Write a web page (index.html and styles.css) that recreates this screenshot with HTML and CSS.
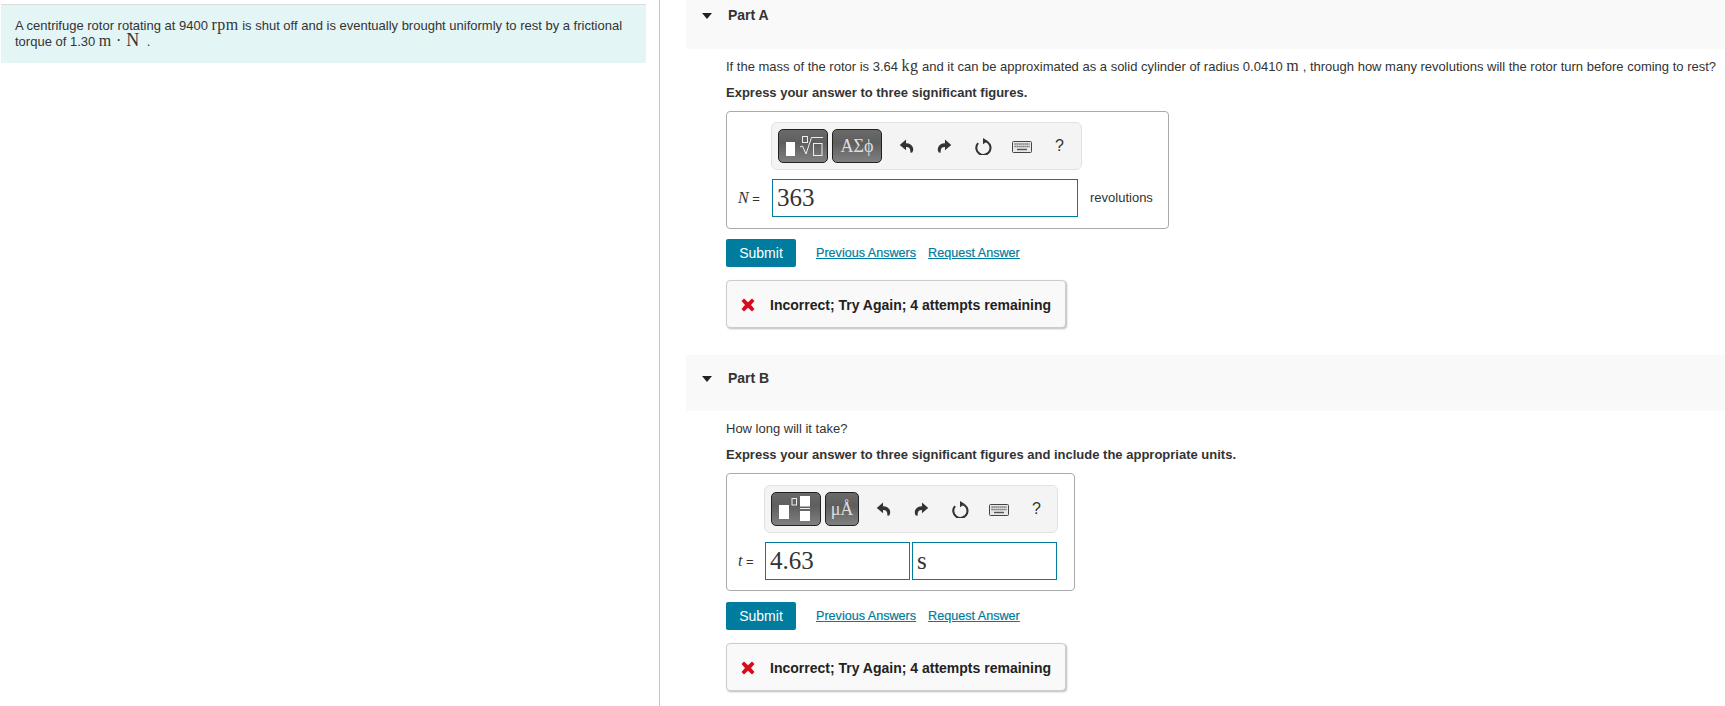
FILE: index.html
```html
<!DOCTYPE html>
<html lang="en">
<head>
<meta charset="utf-8">
<title>Centrifuge rotor</title>
<link rel="stylesheet" href="styles.css">
</head>
<body>
<svg class="defs" width="0" height="0" aria-hidden="true">
  <defs>
    <symbol id="undo" viewBox="0 0 16 16"><path d="M7.500 1 .8 6.800 7.500 12.500V9c2.600-.2 4 .9 4.500 3.500l.2 2.800 1.900-.3c.9-1.600 1.300-3.300.9-5C14 6.800 11.500 5 7.500 5Z"/></symbol>
    <symbol id="redo" viewBox="0 0 16 16"><path d="M8.500 1 15.200 6.800 8.500 12.500V9c-2.600-.2-4 .9-4.500 3.500l-.2 2.800-1.900-.3C1 13.400.6 11.700 1 10 2 6.800 4.500 5 8.500 5Z"/></symbol>
    <symbol id="reset" viewBox="0 0 18 18"><path d="M10.500 3.100A7.500 7.500 0 1 1 3.300 5.400" fill="none" stroke="currentColor" stroke-width="2.200"/><path d="M8.500 0 13.500 3.200 8.500 6.500Z"/></symbol>
    <symbol id="kbd" viewBox="0 0 20 12"><rect x=".5" y=".5" width="19" height="11" rx="1" fill="#e8e8e8" stroke="#444"/><path d="M2.500 3h15M2.500 5.500h15" stroke="#555" stroke-width="1.300" stroke-dasharray="1.200 .8"/><path d="M5 8.500h10" stroke="#555" stroke-width="1.400"/></symbol>
    <symbol id="cross" viewBox="0 0 14 14"><path d="M3 .5 7 4.200 11 .5 13.500 3 10 7 13.500 11 11 13.500 7 9.800 3 13.500 .5 11 4 7 .5 3Z"/></symbol>
  </defs>
</svg>
<div class="page">
  <aside class="left">
    <div class="intro">A centrifuge rotor rotating at 9400 <span class="math">rpm</span> is shut off and is eventually brought uniformly to rest by a frictional torque of 1.30 <span class="math">m · <span class="math-big">N</span></span> &nbsp;.</div>
  </aside>
  <main class="right">
    <section class="part part-a">
      <header class="part-head"><span class="caret"></span><h2>Part A</h2></header>
      <div class="part-body">
        <p class="question">If the mass of the rotor is 3.64 <span class="math">kg</span> and it can be approximated as a solid cylinder of radius 0.0410 <span class="math">m</span> , through how many revolutions will the rotor turn before coming to rest?</p>
        <p class="instr">Express your answer to three significant figures.</p>
        <div class="answer answer-a">
          <div class="toolbar">
            <div class="tool tool-wide">
              <svg width="40" height="28" viewBox="0 0 40 28"><rect x="3" y="10" width="9" height="14" fill="#fff"/><rect x="19.500" y="4.500" width="5" height="6" fill="none" stroke="#eee"/><path d="M17 15l2.500-1 3.500 8 5.500-16.500h11.500" fill="none" stroke="#eee"/><rect x="30.500" y="11.500" width="8.500" height="12" fill="none" stroke="#eee"/></svg>
            </div>
            <div class="tool tool-wide tool-text">ΑΣϕ</div>
            <div class="actions">
              <svg class="ic"><use href="#undo"/></svg>
              <svg class="ic"><use href="#redo"/></svg>
              <svg class="ic-reset"><use href="#reset"/></svg>
              <svg class="ic-kbd"><use href="#kbd"/></svg>
              <span class="help">?</span>
            </div>
          </div>
          <div class="row">
            <span class="var"><i>N</i> =</span>
            <div class="field field-n">363</div>
            <span class="unit">revolutions</span>
          </div>
        </div>
        <div class="submit-row">
          <button class="submit" type="button">Submit</button>
          <a class="link" href="#">Previous Answers</a>
          <a class="link" href="#">Request Answer</a>
        </div>
        <div class="feedback"><svg class="cross"><use href="#cross"/></svg><span>Incorrect; Try Again; 4 attempts remaining</span></div>
      </div>
    </section>
    <section class="part part-b">
      <header class="part-head"><span class="caret"></span><h2>Part B</h2></header>
      <div class="part-body">
        <p class="question">How long will it take?</p>
        <p class="instr">Express your answer to three significant figures and include the appropriate units.</p>
        <div class="answer answer-b">
          <div class="toolbar">
            <div class="tool tool-wide">
              <svg width="40" height="28" viewBox="0 0 40 28"><rect x="3" y="10" width="10" height="14" fill="#fff"/><rect x="16" y="3.500" width="4.500" height="6.500" fill="none" stroke="#eee"/><rect x="24" y="1" width="10" height="10.500" fill="#fff"/><path d="M24 13.500h10" stroke="#eee"/><rect x="24" y="16" width="10" height="10" fill="#fff"/></svg>
            </div>
            <div class="tool tool-narrow tool-text">μÅ</div>
            <div class="actions">
              <svg class="ic"><use href="#undo"/></svg>
              <svg class="ic"><use href="#redo"/></svg>
              <svg class="ic-reset"><use href="#reset"/></svg>
              <svg class="ic-kbd"><use href="#kbd"/></svg>
              <span class="help">?</span>
            </div>
          </div>
          <div class="row">
            <span class="var var-t"><i>t</i> =</span>
            <div class="field field-t">4.63</div>
            <div class="field field-t">s</div>
          </div>
        </div>
        <div class="submit-row">
          <button class="submit" type="button">Submit</button>
          <a class="link" href="#">Previous Answers</a>
          <a class="link" href="#">Request Answer</a>
        </div>
        <div class="feedback"><svg class="cross"><use href="#cross"/></svg><span>Incorrect; Try Again; 4 attempts remaining</span></div>
      </div>
    </section>
  </main>
</div>
</body>
</html>
```
FILE: styles.css
```css
* { box-sizing: border-box; }
html, body { margin: 0; height: 706px; overflow: hidden; background: #fff; }
body { font-family: "Liberation Sans", Arial, sans-serif; font-size: 13px; color: #333; }
.defs { position: absolute; }
.page { display: flex; height: 706px; }
.left { width: 660px; flex: none; border-right: 1px solid #bcc8da; padding: 4px 0 0 1px; }
.intro { width: 645px; height: 59px; background: #e4f5f6; border-top: 1px solid #ddd; padding: 13px 20px 0 14px; line-height: 15px; }
.math { font-family: "Liberation Serif", serif; font-size: 16px; line-height: 14px; letter-spacing: .4px; color: #333; }
.math-big { font-size: 18px; }
.right { flex: 1; min-width: 0; padding-left: 26px; }
.part-head { display: flex; align-items: flex-start; height: 49px; background: #f9f9f9; padding: 7px 0 0 16px; }
.part-b .part-head { height: 56px; padding-top: 15px; }
.caret { width: 0; height: 0; margin-top: 6px; border-left: 5px solid transparent; border-right: 5px solid transparent; border-top: 6px solid #222; }
.part-head h2 { margin: 0 0 0 16px; font-size: 14px; line-height: 16px; font-weight: bold; color: #333; }
.part-a { margin-bottom: 27px; }
.part-body { padding-left: 40px; white-space: nowrap; }
.question { margin: 0; padding-top: 10px; height: 33px; line-height: 16px; }
.part-b .question { height: 31px; }
.instr { margin: 0; height: 29px; padding-top: 3px; line-height: 16px; font-weight: bold; }
.part-b .instr { height: 31px; padding-top: 5px; }
.answer { border: 1px solid #aaa; border-radius: 4px; height: 118px; padding: 10px 0 0 44px; }
.answer-a { width: 443px; }
.answer-b { width: 349px; padding: 11px 0 0 37px; }
.toolbar { display: flex; align-items: center; height: 48px; background: #f4f4f4; border: 1px solid #e2e2e2; border-radius: 6px; padding: 0 6px; gap: 4px; }
.answer-a .toolbar { width: 311px; }
.answer-b .toolbar { width: 294px; }
.tool { height: 34px; display: flex; align-items: center; justify-content: center; border: 1px solid #222; border-radius: 5px; background: linear-gradient(#6a6a6a, #5e5e5e 40%, #808080); color: #ddd; }
.tool-wide { width: 50px; }
.tool-narrow { width: 34px; }
.tool-text { font-family: "Liberation Serif", serif; font-size: 18px; }
.actions { display: flex; align-items: center; margin-left: 13px; color: #333; fill: #333; }
.ic { width: 15px; height: 16px; margin-right: 23px; }
.ic-reset { width: 17px; height: 17px; margin-right: 20px; }
.ic-kbd { width: 20px; height: 12px; margin: 2px 23px 0 0; }
.help { font-size: 16px; }
.row { display: flex; align-items: center; margin-top: 9px; margin-left: -33px; }
.answer-b .row { margin-left: -26px; }
.var { width: 34px; font-size: 13px; }
.var i { font-family: "Liberation Serif", serif; font-size: 16px; }
.var-t { width: 27px; }
.field { height: 38px; border: 1px solid #007c9e; background: #fff; padding: 0 4px; font-family: "Liberation Serif", serif; font-size: 25px; line-height: 36px; color: #333; }
.field-n { width: 306px; }
.field-t { width: 145px; margin-right: 2px; }
.unit { margin: -2px 0 0 12px; }
.submit-row { display: flex; align-items: center; margin-top: 10px; height: 28px; }
.part-b .submit-row { margin-top: 11px; }
.submit { width: 70px; height: 28px; padding: 0; border: 0; border-radius: 2px; background: #007c9e; color: #fff; font: 14px "Liberation Sans", Arial, sans-serif; margin-right: 20px; }
.link { color: #007c9e; margin-right: 12px; font-size: 12.6px; text-decoration: underline; -webkit-text-stroke: .2px #007c9e; }
.feedback { display: flex; align-items: center; width: 340px; height: 48px; margin-top: 13px; padding: 1px 0 0 14px; background: #f9f9f9; border: 1px solid #ccc; border-radius: 4px; box-shadow: 1px 1px 2px #bbb; font-size: 14px; font-weight: bold; color: #222; }
.cross { width: 14px; height: 14px; fill: #d90b1e; margin-right: 15px; flex: none; }
```
